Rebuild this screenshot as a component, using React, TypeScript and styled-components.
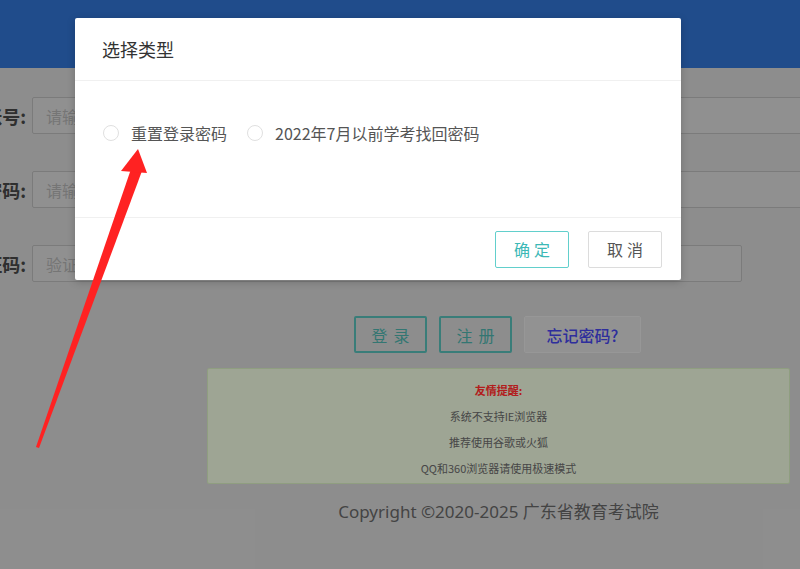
import styled, { createGlobalStyle } from 'styled-components';

const GlobalStyle = createGlobalStyle`
html, body {
    margin: 0;
    padding: 0;
    overflow: hidden;
}
body {
    font-family: 'Noto Sans', 'Noto Sans CJK SC', sans-serif;
}
`;

const fields = [
    { label: '账号:', placeholder: '请输入账号', width: 900 },
    { label: '密码:', placeholder: '请输入密码', width: 900 },
    { label: '验证码:', placeholder: '验证码', width: 710 },
];

const tips = ['系统不支持IE浏览器', '推荐使用谷歌或火狐', 'QQ和360浏览器请使用极速模式'];

const options = ['重置登录密码', '2022年7月以前学考找回密码'];

export default function App() {
    return (
        <>
            <GlobalStyle />
            <Page>
                <Header />
                <Main>
                    {fields.map(f => (
                        <FormRow key={f.label}>
                            <Label>{f.label}</Label>
                            <Input width={f.width} placeholder={f.placeholder} />
                        </FormRow>
                    ))}
                    <ButtonRow>
                        <TealButton>登录</TealButton>
                        <TealButton>注册</TealButton>
                        <LinkButton>忘记密码?</LinkButton>
                    </ButtonRow>
                    <Notice>
                        <NoticeTitle>友情提醒:</NoticeTitle>
                        {tips.map(t => <NoticeLine key={t}>{t}</NoticeLine>)}
                    </Notice>
                    <Copyright>Copyright ©2020-2025 广东省教育考试院</Copyright>
                </Main>
                <Mask />
                <Modal>
                    <ModalHead>选择类型</ModalHead>
                    <ModalBody>
                        {options.map(o => (
                            <RadioLabel key={o}>
                                <RadioCircle />
                                {o}
                            </RadioLabel>
                        ))}
                    </ModalBody>
                    <ModalFoot>
                        <ModalButton primary>确定</ModalButton>
                        <ModalButton>取消</ModalButton>
                    </ModalFoot>
                </Modal>
                <Arrow viewBox="0 0 800 569">
                    <polygon points="131,169 142,171 39,448 36,447" fill="#ff2222" />
                    <polygon points="138,149 121,171 147,173" fill="#ff2222" />
                </Arrow>
            </Page>
        </>
    );
}

const Page = styled.div`
position: relative;
width: 800px;
height: 569px;
overflow: hidden;
background: #cbcbcb;
`;

const Header = styled.div`
height: 68px;
background: #2f6ec8;
`;

const Main = styled.div`
display: flex;
flex-direction: column;
padding-top: 29px;
`;

const FormRow = styled.div`
display: flex;
align-items: center;
margin-bottom: 37px;
`;

const Label = styled.div`
display: flex;
justify-content: flex-end;
width: 26px;
margin-right: 6px;
white-space: nowrap;
font-size: 18px;
font-weight: bold;
color: #444;
font-family: 'Noto Sans CJK SC', sans-serif;
`;

const Input = styled.input<{ width: number }>`
flex: none;
box-sizing: border-box;
width: ${p => p.width}px;
height: 37px;
padding: 0 13px;
border: 1px solid #b0b0b0;
border-radius: 2px;
background: #cfcfcf;
font-size: 16px;
font-family: 'Noto Sans CJK SC', sans-serif;
outline: none;
&::placeholder {
    color: #a8a8a8;
}
`;

const ButtonRow = styled.div`
display: flex;
gap: 12px;
padding-left: 354px;
margin-top: -3px;
`;

const TealButton = styled.div`
display: flex;
align-items: center;
justify-content: center;
box-sizing: border-box;
width: 73px;
height: 37px;
border: 2px solid #52b4ae;
border-radius: 2px;
color: #4aaaa4;
font-size: 16px;
letter-spacing: 6px;
text-indent: 6px;
font-family: 'Noto Sans CJK SC', sans-serif;
`;

const LinkButton = styled.div`
display: flex;
align-items: center;
justify-content: center;
box-sizing: border-box;
width: 117px;
height: 37px;
border: 1px solid #d8d8d8;
border-radius: 2px;
background: #d2d2d2;
color: #4242e0;
font-size: 16px;
font-weight: 500;
font-family: 'Noto Sans CJK SC', sans-serif;
`;

const Notice = styled.div`
box-sizing: border-box;
width: 583px;
height: 116px;
margin: 15px 0 0 207px;
padding-top: 11px;
border: 1px solid #cde2b8;
border-radius: 2px;
background: #e2ecd4;
text-align: center;
font-family: 'Noto Sans CJK SC', sans-serif;
font-size: 11px;
line-height: 26px;
`;

const NoticeTitle = styled.div`
color: #ff2a2a;
font-weight: bold;
line-height: 20px;
margin-bottom: 3px;
`;

const NoticeLine = styled.div`
color: #666;
`;

const Copyright = styled.div`
width: 583px;
margin: 14px 0 0 207px;
text-align: center;
font-size: 17px;
color: #626262;
font-family: 'Noto Sans', 'Noto Sans CJK SC', sans-serif;
`;

const Mask = styled.div`
position: absolute;
inset: 0;
background: rgba(0, 0, 0, 0.3);
`;

const Modal = styled.div`
position: absolute;
left: 75px;
top: 18px;
width: 606px;
height: 262px;
display: flex;
flex-direction: column;
background: #fff;
border-radius: 2px;
box-shadow: 0 2px 8px rgba(0, 0, 0, 0.2);
font-family: 'Noto Sans CJK SC', sans-serif;
`;

const ModalHead = styled.div`
display: flex;
align-items: center;
height: 62px;
padding-left: 27px;
border-bottom: 1px solid #f0f0f0;
font-size: 18px;
color: #333;
`;

const ModalBody = styled.div`
display: flex;
align-items: flex-start;
gap: 20px;
height: 137px;
box-sizing: border-box;
padding: 40px 0 0 28px;
border-bottom: 1px solid #f0f0f0;
`;

const RadioLabel = styled.label`
display: flex;
align-items: center;
gap: 12px;
font-size: 16px;
color: #555;
line-height: 24px;
`;

const RadioCircle = styled.span`
display: inline-block;
box-sizing: border-box;
width: 16px;
height: 16px;
border: 1px solid #e0e0e0;
border-radius: 50%;
background: #fff;
`;

const ModalFoot = styled.div`
flex: 1;
display: flex;
align-items: center;
justify-content: flex-end;
gap: 19px;
padding-right: 19px;
`;

const ModalButton = styled.div<{ primary?: boolean }>`
display: flex;
align-items: center;
justify-content: center;
box-sizing: border-box;
width: 74px;
height: 37px;
border: 1px solid ${p => (p.primary ? '#62cfcc' : '#dcdcdc')};
border-radius: 2px;
background: #fff;
color: ${p => (p.primary ? '#3cb8b6' : '#555')};
font-size: 16px;
letter-spacing: 4px;
text-indent: 4px;
`;

const Arrow = styled.svg`
position: absolute;
inset: 0;
width: 800px;
height: 569px;
pointer-events: none;
`;
